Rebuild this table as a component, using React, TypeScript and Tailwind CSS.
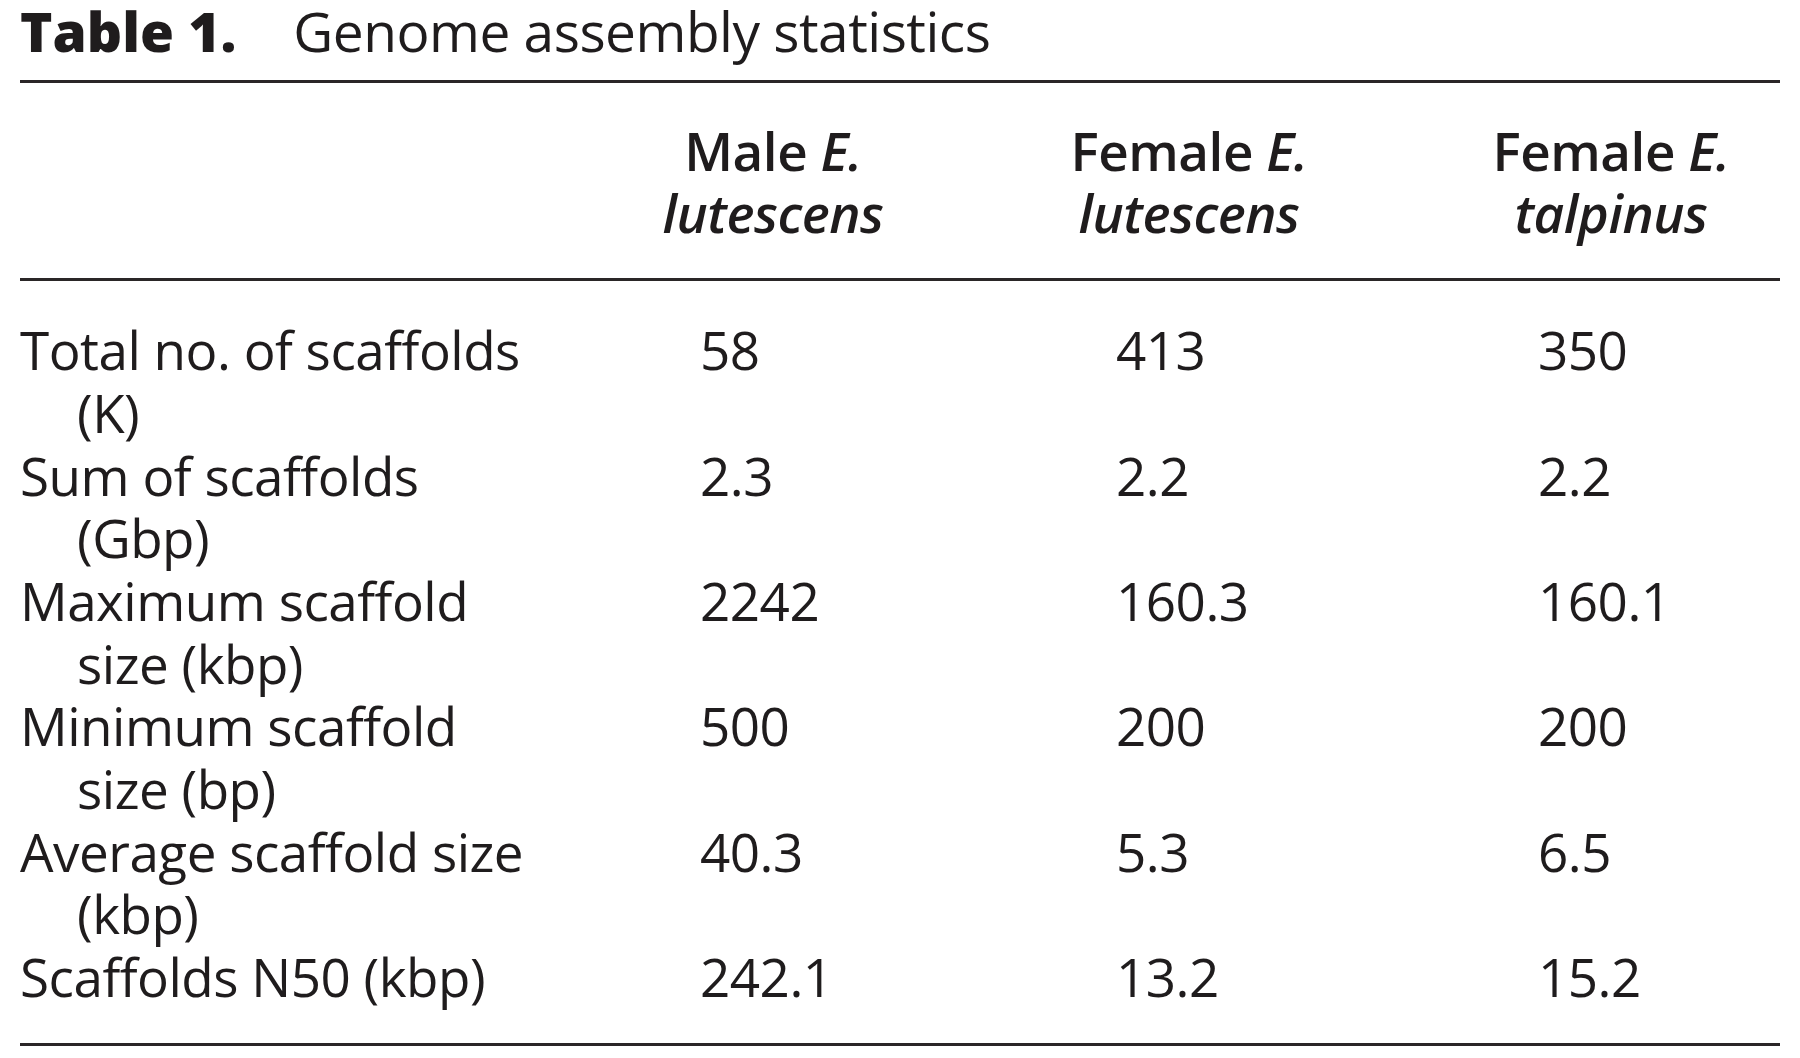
const rows: { label: string[]; values: string[] }[] = [
  { label: ["Total no. of scaffolds", "(K)"], values: ["58", "413", "350"] },
  { label: ["Sum of scaffolds", "(Gbp)"], values: ["2.3", "2.2", "2.2"] },
  { label: ["Maximum scaffold", "size (kbp)"], values: ["2242", "160.3", "160.1"] },
  { label: ["Minimum scaffold", "size (bp)"], values: ["500", "200", "200"] },
  { label: ["Average scaffold size", "(kbp)"], values: ["40.3", "5.3", "6.5"] },
  { label: ["Scaffolds N50 (kbp)"], values: ["242.1", "13.2", "15.2"] },
];

const headers: { name: string; species: string }[] = [
  { name: "Male", species: "lutescens" },
  { name: "Female", species: "lutescens" },
  { name: "Female", species: "talpinus" },
];

export default function App() {
  return (
    <div
      className="w-[1800px] h-[1058px] bg-white px-5 text-[#1f1c1d] text-[53px] leading-[62.7px] tracking-[-0.5px]"
      style={{ fontFamily: '"Open Sans", "Noto Sans", sans-serif' }}
    >
      <div className="whitespace-nowrap text-[55px]">
        <span className="font-extrabold tracking-normal">Table 1.</span>
        <span className="ml-[57px]">Genome assembly statistics</span>
      </div>

      <div className="mt-[17px] h-[3px] bg-[#2a2627]" />

      <div className="grid grid-cols-[680px_416px_422px_1fr] pt-[37px] pb-[33px]">
        <div />
        {headers.map((h, i) => (
          <div key={i} className="w-[146px] flex flex-col items-center font-semibold whitespace-nowrap">
            <span>
              {h.name} <em>E.</em>
            </span>
            <em>{h.species}</em>
          </div>
        ))}
      </div>

      <div className="h-[3px] bg-[#2a2627]" />

      <div className="grid grid-cols-[680px_416px_422px_1fr] pt-[38px] pb-[34px]">
        {rows.map((r, i) => (
          <div key={i} className="contents">
            <div className="whitespace-nowrap">
              {r.label.map((line, j) => (
                <div key={j} className={j > 0 ? "pl-[57px]" : ""}>
                  {line}
                </div>
              ))}
            </div>
            {r.values.map((v, j) => (
              <div key={j}>{v}</div>
            ))}
          </div>
        ))}
      </div>

      <div className="h-[3px] bg-[#2a2627]" />
    </div>
  );
}
